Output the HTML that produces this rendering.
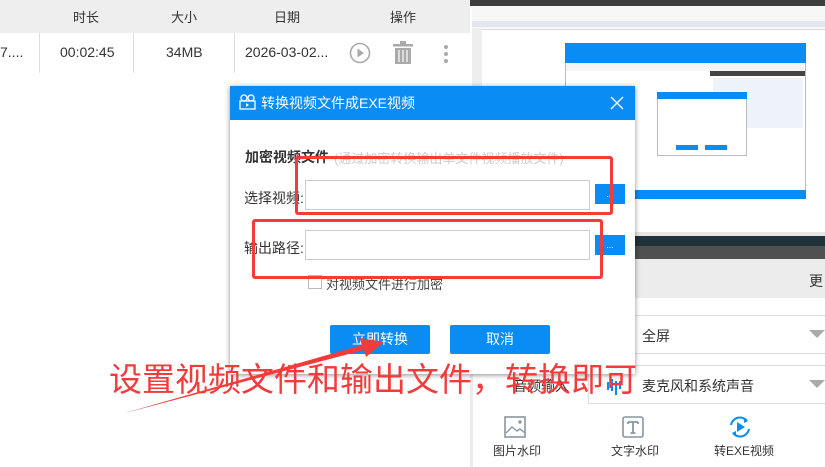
<!DOCTYPE html>
<html><head><meta charset="utf-8"><style>
*{margin:0;padding:0;box-sizing:border-box}
body{width:825px;height:467px;overflow:hidden;position:relative;background:#fff;font-family:"Liberation Sans","Noto Sans CJK SC",sans-serif;color:#333}
.a{position:absolute}
</style></head><body>
<div class="a" style="left:0;top:0;width:470px;height:33px;background:#eeeeee"></div>
<div class="a" style="left:73px;top:7px;font-size:13px">时长</div>
<div class="a" style="left:171px;top:7px;font-size:13px">大小</div>
<div class="a" style="left:274px;top:7px;font-size:13px">日期</div>
<div class="a" style="left:390px;top:7px;font-size:13px">操作</div>
<div class="a" style="left:0;top:44px;font-size:14px">7....</div>
<div class="a" style="left:39px;top:33px;width:1px;height:40px;background:#ddd"></div>
<div class="a" style="left:133px;top:33px;width:1px;height:40px;background:#ddd"></div>
<div class="a" style="left:234px;top:33px;width:1px;height:40px;background:#ddd"></div>
<div class="a" style="left:60px;top:44px;font-size:14px">00:02:45</div>
<div class="a" style="left:166px;top:44px;font-size:14px">34MB</div>
<div class="a" style="left:245px;top:44px;font-size:14px">2026-03-02...</div>
<svg class="a" style="left:349px;top:42px" width="22" height="22"><circle cx="11" cy="11" r="9.5" fill="none" stroke="#aaa" stroke-width="1.6"/><path d="M8.5 6.5L15 11L8.5 15.5Z" fill="#aaa"/></svg>
<svg class="a" style="left:392px;top:41px" width="22" height="24"><rect x="1" y="3" width="20" height="2.5" fill="#aaa"/><rect x="8" y="0" width="6" height="3" fill="#aaa"/><path d="M3 7h16v16H3z" fill="#aaa"/><path d="M7 9v12M11 9v12M15 9v12" stroke="#fff" stroke-width="1.2"/></svg>
<div class="a" style="left:444px;top:45px;width:4px;height:4px;border-radius:2px;background:#aaa"></div>
<div class="a" style="left:444px;top:52px;width:4px;height:4px;border-radius:2px;background:#aaa"></div>
<div class="a" style="left:444px;top:59px;width:4px;height:4px;border-radius:2px;background:#aaa"></div>
<div class="a" style="left:470px;top:0;width:355px;height:6px;background:#3d3d3d"></div>
<div class="a" style="left:472px;top:6px;width:353px;height:24px;background:#f7f7f7;border-bottom:1px solid #ddd"></div>
<div class="a" style="left:472px;top:21px;width:353px;height:6px;background:#e2e6f0"></div>
<div class="a" style="left:472px;top:28px;width:10px;height:204px;background:#eee"></div>
<div class="a" style="left:565px;top:43px;width:241px;height:156px;background:#fff;border:1px solid #bbb"></div>
<div class="a" style="left:565px;top:43px;width:241px;height:20px;background:#0a8cf5"></div>
<div class="a" style="left:566px;top:63px;width:239px;height:8px;background:#f4f4f4"></div>
<div class="a" style="left:710px;top:71px;width:95px;height:5px;background:#444"></div>
<div class="a" style="left:713px;top:78px;width:90px;height:50px;background:#eef3fa"></div>
<div class="a" style="left:565px;top:190px;width:241px;height:9px;background:#0a8cf5"></div>
<div class="a" style="left:657px;top:92px;width:90px;height:64px;background:#fff;border:1px solid #bbb"></div>
<div class="a" style="left:657px;top:92px;width:90px;height:7px;background:#0a8cf5"></div>
<div class="a" style="left:676px;top:145px;width:22px;height:5px;background:#0a8cf5"></div>
<div class="a" style="left:705px;top:145px;width:22px;height:5px;background:#0a8cf5"></div>
<div class="a" style="left:472px;top:232px;width:353px;height:4px;background:#e6e6e6"></div>
<div class="a" style="left:470px;top:236px;width:355px;height:10px;background:#23313a"></div>
<div class="a" style="left:470px;top:246px;width:355px;height:13px;background:#505050"></div>
<div class="a" style="left:470px;top:259px;width:355px;height:39px;background:#ececec"></div>
<div class="a" style="left:470px;top:298px;width:3px;height:169px;background:#ececec"></div>
<div class="a" style="left:809px;top:271px;font-size:14px">更</div>
<div class="a" style="left:588px;top:315px;width:240px;height:39px;border:1px solid #ddd;border-right:none"></div>
<div class="a" style="left:642px;top:326px;font-size:14px">全屏</div>
<div class="a" style="left:809px;top:330px;width:0;height:0;border-left:8px solid transparent;border-right:8px solid transparent;border-top:8px solid #aaa"></div>
<div class="a" style="left:588px;top:365px;width:240px;height:39px;border:1px solid #ddd;border-right:none"></div>
<div class="a" style="left:513px;top:376px;font-size:14px">音频输入</div>
<svg class="a" style="left:605px;top:376px" width="20" height="20"><path d="M3 6v8M7 3v12M11 5v14M15 5v8" stroke="#0a8cf5" stroke-width="2"/></svg>
<div class="a" style="left:642px;top:376px;font-size:14px">麦克风和系统声音</div>
<div class="a" style="left:809px;top:380px;width:0;height:0;border-left:8px solid transparent;border-right:8px solid transparent;border-top:8px solid #aaa"></div>
<svg class="a" style="left:504px;top:416px" width="22" height="22"><rect x="1" y="1" width="20" height="20" fill="none" stroke="#8a96a0" stroke-width="1.6"/><path d="M2 17l6-6 5 4 3-2 5 4" fill="none" stroke="#8a96a0" stroke-width="1.4"/><circle cx="16" cy="6" r="1.7" fill="#8a96a0"/></svg>
<div class="a" style="left:493px;top:442px;font-size:12px">图片水印</div>
<svg class="a" style="left:622px;top:416px" width="22" height="22"><rect x="1" y="1" width="20" height="20" rx="2" fill="none" stroke="#8a96a0" stroke-width="1.6"/><path d="M6 6h10M11 6v11M8.5 17h5M6 6v2M16 6v2" stroke="#8a96a0" stroke-width="1.8"/></svg>
<div class="a" style="left:611px;top:442px;font-size:12px">文字水印</div>
<svg class="a" style="left:728px;top:415px" width="24" height="24"><path d="M3 10a9 9 0 0 1 16-4M21 14a9 9 0 0 1-16 4" fill="none" stroke="#0a8cf5" stroke-width="2"/><path d="M16 3l4 3-4 2z M8 21l-4-3 4-2z" fill="#0a8cf5"/><path d="M9 7l8 5-8 5z" fill="#0a8cf5"/></svg>
<div class="a" style="left:714px;top:442px;font-size:12px">转EXE视频</div>
<div class="a" style="left:230px;top:86px;width:405px;height:288px;background:#fff;box-shadow:0 1px 5px rgba(0,0,0,.45)"></div>
<div class="a" style="left:230px;top:86px;width:405px;height:34px;background:#0a8cf5"></div>
<svg class="a" style="left:239px;top:94px" width="18" height="16"><circle cx="5" cy="4" r="3" fill="none" stroke="#fff" stroke-width="1.3"/><circle cx="12" cy="4" r="3" fill="none" stroke="#fff" stroke-width="1.3"/><rect x="1" y="7" width="15" height="8" fill="none" stroke="#fff" stroke-width="1.3"/><path d="M7 9l3 2-3 2z" fill="#fff"/></svg>
<div class="a" style="left:261px;top:93px;font-size:14px;color:#fff">转换视频文件成EXE视频</div>
<svg class="a" style="left:610px;top:96px" width="14" height="14"><path d="M1 1L13 13M13 1L1 13" stroke="#fff" stroke-width="1.4"/></svg>
<div class="a" style="left:245px;top:147px;font-size:14px;color:#333;font-weight:bold">加密视频文件</div>
<div class="a" style="left:334px;top:148px;font-size:13px;color:#ccc">(通过加密转换输出单文件视频播放文件)</div>
<div class="a" style="left:244px;top:188px;font-size:14px">选择视频:</div>
<div class="a" style="left:305px;top:180px;width:285px;height:30px;border:1px solid #ccc"></div>
<div class="a" style="left:595px;top:184px;width:30px;height:20px;background:#0a8cf5;color:#fff;font-size:9px;text-align:center;line-height:20px">...</div>
<div class="a" style="left:244px;top:238px;font-size:14px">输出路径:</div>
<div class="a" style="left:305px;top:230px;width:285px;height:30px;border:1px solid #ccc"></div>
<div class="a" style="left:595px;top:235px;width:30px;height:20px;background:#0a8cf5;color:#fff;font-size:9px;text-align:center;line-height:20px">...</div>
<div class="a" style="left:308px;top:275px;width:14px;height:14px;border:1px solid #bbb"></div>
<div class="a" style="left:326px;top:274px;font-size:13px;color:#444">对视频文件进行加密</div>
<div class="a" style="left:330px;top:325px;width:100px;height:29px;background:#0a8cf5;border-radius:2px;color:#fff;font-size:14px;text-align:center;line-height:29px">立即转换</div>
<div class="a" style="left:450px;top:325px;width:100px;height:29px;background:#0a8cf5;border-radius:2px;color:#fff;font-size:14px;text-align:center;line-height:29px">取消</div>
<div class="a" style="left:295px;top:156px;width:318px;height:59px;border:3px solid #f33b3b;border-radius:3px"></div>
<div class="a" style="left:252px;top:219px;width:351px;height:60px;border:3px solid #f33b3b;border-radius:3px"></div>
<svg class="a" style="left:0;top:0" width="825" height="467"><path d="M125 413L362 345L360 338L384 342L366 357L364 350Z" fill="#f33b3b"/></svg>
<div class="a" style="left:109px;top:353px;font-size:33px;color:#f33b3b;white-space:nowrap">设置视频文件和输出文件，转换即可</div>
</body></html>
